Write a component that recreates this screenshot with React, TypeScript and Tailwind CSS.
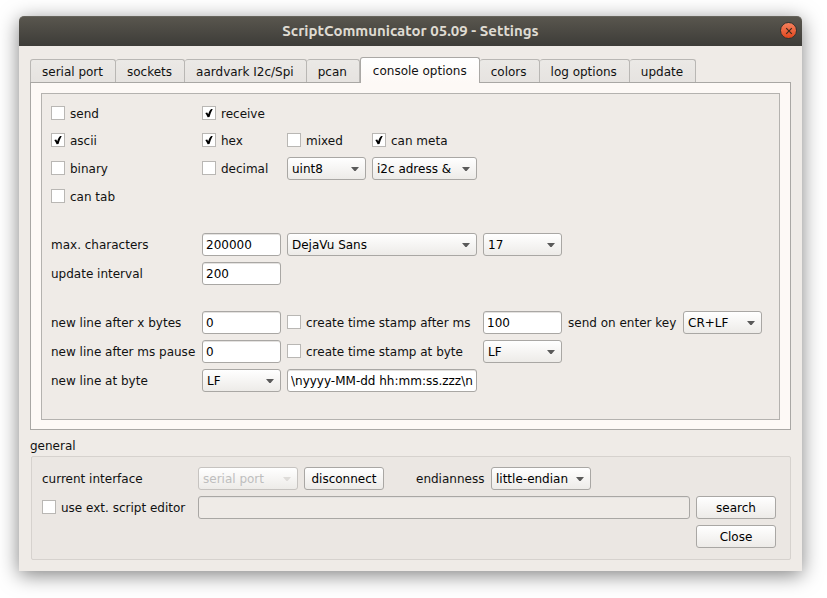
import { useState, type ReactNode } from "react";
import clsx from "clsx";

const TABS = [
  "serial port",
  "sockets",
  "aardvark I2c/Spi",
  "pcan",
  "console options",
  "colors",
  "log options",
  "update",
];

function Check({ label, checked = false, className }: { label: string; checked?: boolean; className?: string }) {
  return (
    <label className={clsx("flex h-[21px] items-center gap-[5px] whitespace-nowrap", className)}>
      <span className="relative mb-px size-3.5 shrink-0">
        <input
          type="checkbox"
          defaultChecked={checked}
          className="peer block size-3.5 appearance-none border border-[#b9b7b4] bg-white"
        />
        <svg
          viewBox="0 0 14 14"
          className="pointer-events-none absolute inset-0 hidden size-3.5 peer-checked:block"
          aria-hidden="true"
        >
          <path d="M3.3 7 L5.2 6.4 L6.2 8.2 C6.8 6 7.8 4.2 9.2 2.9 L10.7 3.1 C9.3 5.6 8.4 8.2 7.5 11 L5.6 11.3 C4.9 9.8 4.2 8.4 3.3 7 Z" fill="#000" />
        </svg>
      </span>
      {label}
    </label>
  );
}

function Select({ id, label, value, disabled = false, className }: {
  id: string;
  label?: string;
  value: string;
  disabled?: boolean;
  className?: string;
}) {
  return (
    <div className={clsx("relative h-[23px]", className)}>
      <select
        id={id}
        aria-label={label}
        disabled={disabled}
        defaultValue={value}
        className="block h-full w-full appearance-none truncate rounded-[3px] border border-[#a9a7a4] bg-linear-to-b from-white to-[#edebe8] pt-px pr-5 pl-1 text-black disabled:border-[#c6c3c0] disabled:text-[#bebebe] disabled:opacity-100"
      >
        <option>{value}</option>
      </select>
      <svg
        viewBox="0 0 8 4"
        className={clsx(
          "pointer-events-none absolute top-[10px] right-[7px] h-1 w-2",
          disabled ? "fill-[#dedcd9]" : "fill-[#5a5a5a]",
        )}
        aria-hidden="true"
      >
        <path d="M0 0H8L4.6 4H3.4Z" />
      </svg>
    </div>
  );
}

function TextBox({ id, label, value, disabled = false, className }: {
  id: string;
  label?: string;
  value: string;
  disabled?: boolean;
  className?: string;
}) {
  return (
    <input
      id={id}
      aria-label={label}
      type="text"
      defaultValue={value}
      disabled={disabled}
      className={clsx(
        "h-[23px] min-w-0 rounded-[3px] border border-[#a9a7a4] bg-white px-[3px] text-black shadow-[inset_0_1px_0_#e4e2e0] disabled:bg-[#efebe7]",
        className,
      )}
    />
  );
}

function PushButton({ children }: { children: ReactNode }) {
  return (
    <button
      type="button"
      className="h-[23px] w-20 shrink-0 rounded-[3px] border border-[#a9a7a4] bg-linear-to-b from-white to-[#edebe8] text-black"
    >
      {children}
    </button>
  );
}

export default function App() {
  const [active, setActive] = useState("console options");

  return (
    <div className="bg-white pt-4 pr-[25px] pb-[27px] pl-[19px] font-['DejaVu_Sans','Liberation_Sans',sans-serif] text-[12px] leading-4 text-[#111]">
      <main className="rounded-t-[5px] bg-[#efebe7] shadow-[0_4px_20px_rgba(0,0,0,0.5)]">
        <header className="grid h-[30px] grid-cols-[1fr_auto_1fr] items-center rounded-t-[5px] border-t border-[#66645c] bg-linear-to-b from-[#59564e] to-[#3d3c38] px-[5px] pb-0.5">
          <h1 className="col-start-2 font-['Ubuntu','Noto_Sans',sans-serif] text-[15px] leading-5 font-bold text-[#dfdbd2]">
            ScriptCommunicator 05.09 - Settings
          </h1>
          <button
            type="button"
            aria-label="Close window"
            className="flex size-[17px] items-center justify-center justify-self-end rounded-full border border-[#35332f] bg-linear-to-b from-[#f4805c] to-[#e0451a]"
          >
            <svg viewBox="0 0 8 8" className="size-2" aria-hidden="true">
              <path d="M1.2 1.2L6.8 6.8M6.8 1.2L1.2 6.8" stroke="#3a2a1c" strokeWidth="1.2" />
            </svg>
          </button>
        </header>

        <div className="px-[11px] pt-[11px] pb-[11px]">
          <div role="tablist" className="relative flex h-[26px] items-end">
            {TABS.map((tab, i) => {
              const selected = tab === active;
              return (
                <button
                  key={tab}
                  type="button"
                  role="tab"
                  aria-selected={selected}
                  onClick={() => setActive(tab)}
                  className={clsx(
                    "shrink-0 rounded-t-[3px] border-t border-r whitespace-nowrap",
                    i === 0 && "border-l",
                    selected
                      ? "h-[26px] border-[#aaa8a5] bg-linear-to-b from-white to-[#fdf9f6] px-3"
                      : "mb-px h-[23px] border-[#b9b7b4] bg-linear-to-b from-[#ebe9e6] to-[#e6e3e0] pt-0.5 pr-3 pl-[11px]",
                    selected && i > 0 && "border-l",
                  )}
                >
                  {tab}
                </button>
              );
            })}
          </div>

          <section role="tabpanel" aria-label={active} className="-mt-px border border-[#a9a7a4] bg-[#fdf9f6] px-2.5 pt-2.5 pb-[9px]">
            <div className="border border-[#b4b2af] bg-[#efebe7] px-[9px] pt-[9px] pb-[27px]">
              <div className="grid grid-cols-[145px_79px_79px_105px_79px_109px_79px] items-center gap-1.5">
                <Check label="send" />
                <Check label="receive" checked className="col-span-6" />

                <Check label="ascii" checked />
                <Check label="hex" checked />
                <Check label="mixed" />
                <Check label="can meta" checked className="col-span-4" />

                <Check label="binary" />
                <Check label="decimal" />
                <Select id="decimal-type" label="decimal type" value="uint8" />
                <Select id="can-meta-type" label="i2c meta information" value="i2c adress &" />

                <Check label="can tab" className="col-span-7" />
              </div>

              <div className="mt-[26px] grid grid-cols-[145px_79px_190px_79px] items-center gap-1.5">
                <label htmlFor="max-chars">max. characters</label>
                <TextBox id="max-chars" value="200000" />
                <Select id="font-family" label="font" value="DejaVu Sans" />
                <Select id="font-size" label="font size" value="17" />

                <label htmlFor="update-interval">update interval</label>
                <TextBox id="update-interval" value="200" />
              </div>

              <div className="mt-[26px] grid grid-cols-[145px_79px_190px_79px_109px_79px] items-center gap-1.5">
                <label htmlFor="bytes">new line after x bytes</label>
                <TextBox id="bytes" value="0" />
                <Check label="create time stamp after ms" />
                <TextBox id="stamp-ms" label="time stamp interval" value="100" />
                <label htmlFor="enter-key" className="whitespace-nowrap">send on enter key</label>
                <Select id="enter-key" value="CR+LF" />

                <label htmlFor="pause" className="whitespace-nowrap">new line after ms pause</label>
                <TextBox id="pause" value="0" />
                <Check label="create time stamp at byte" />
                <Select id="stamp-byte" label="time stamp byte" value="LF" />

                <label htmlFor="line-byte" className="col-start-1">new line at byte</label>
                <Select id="line-byte" value="LF" />
                <TextBox id="stamp-format" label="time stamp format" value="\nyyyy-MM-dd hh:mm:ss.zzz\n" />
              </div>
            </div>
          </section>

          <section aria-labelledby="general-title">
            <h2 id="general-title" className="mt-2 mb-0.5">general</h2>
            <div className="ml-px flex flex-col gap-1.5 rounded-[2px] border border-[#d6d2ce] bg-[#ebe7e3] pt-2.5 pr-[14px] pb-[11px] pl-2.5">
              <div className="flex items-center gap-1.5">
                <label htmlFor="interface" className="w-[150px] shrink-0">current interface</label>
                <Select id="interface" value="serial port" disabled className="w-[100px]" />
                <PushButton>disconnect</PushButton>
                <label htmlFor="endianness" className="ml-[26px] w-[69px]">endianness</label>
                <Select id="endianness" value="little-endian" className="w-[100px]" />
              </div>
              <div className="flex items-center gap-1.5">
                <Check label="use ext. script editor" className="w-[150px] shrink-0" />
                <TextBox id="editor-path" label="script editor path" value="" disabled className="flex-1" />
                <PushButton>search</PushButton>
              </div>
              <div className="flex justify-end">
                <PushButton>Close</PushButton>
              </div>
            </div>
          </section>
        </div>
      </main>
    </div>
  );
}
